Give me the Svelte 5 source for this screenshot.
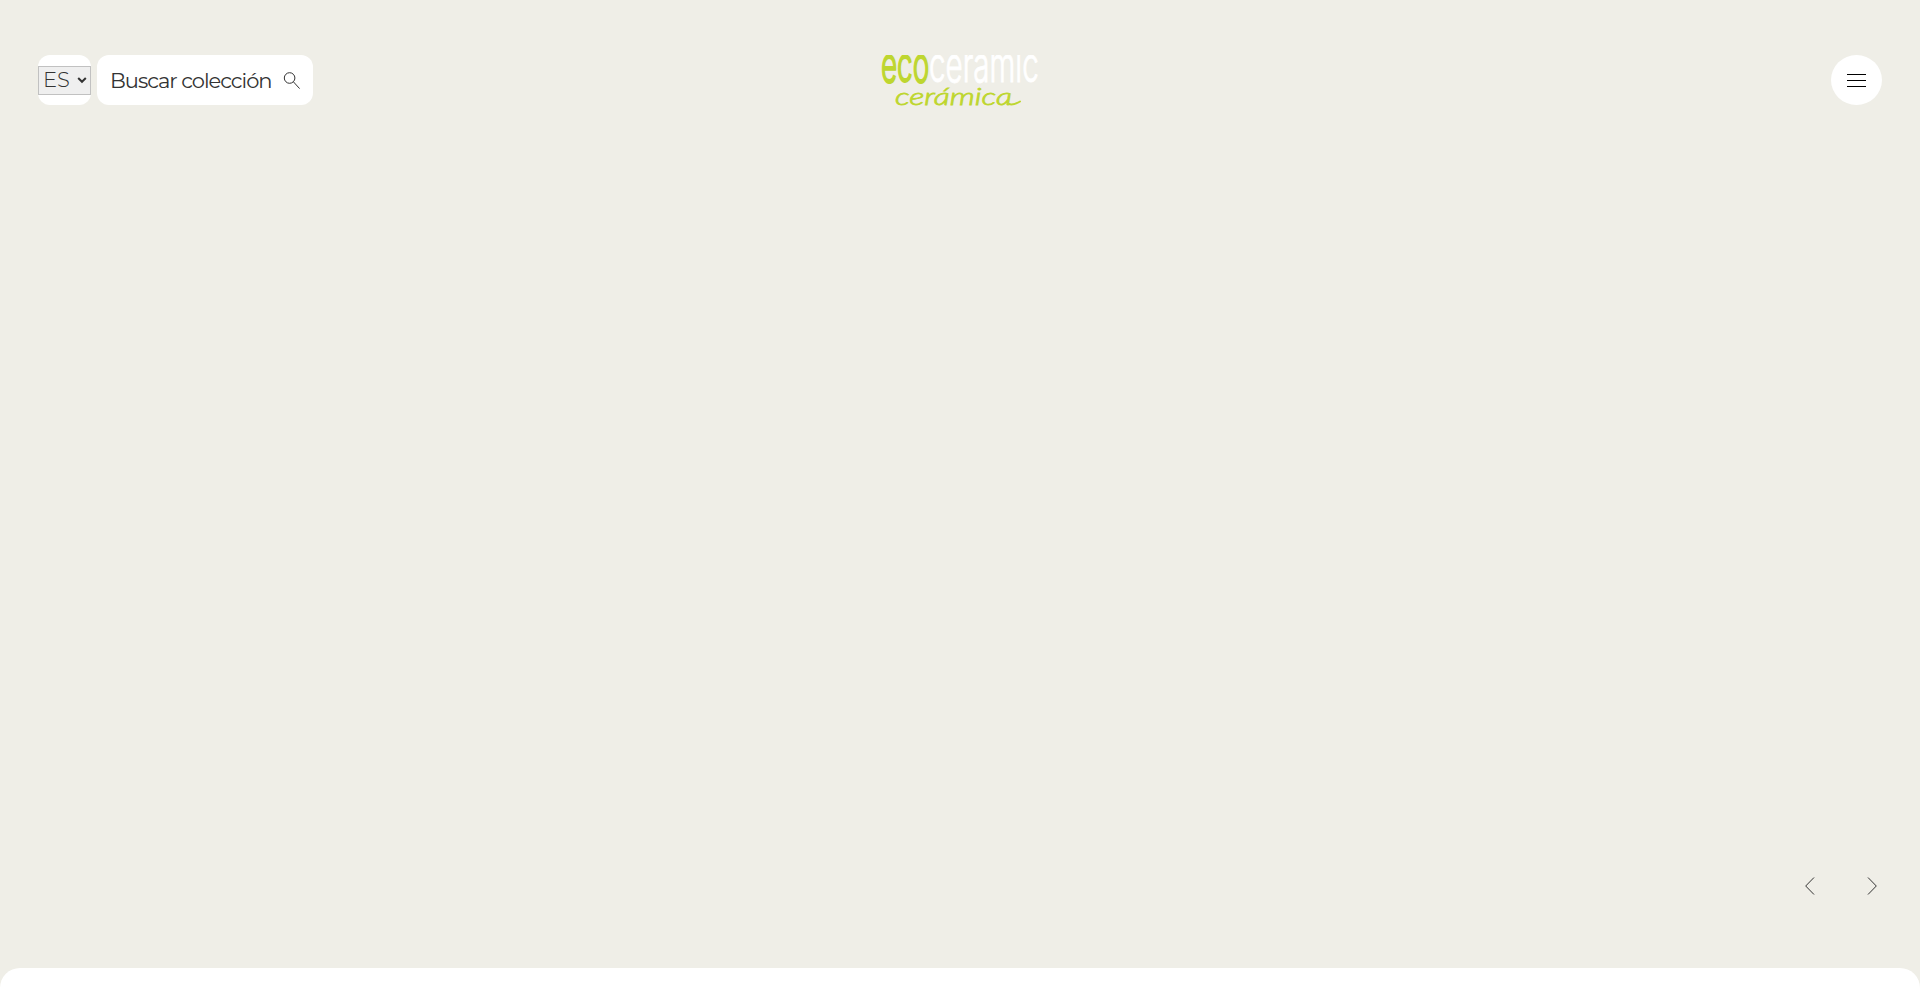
<script>
  let language = $state('ES');
  let menuOpen = $state(false);
  const languages = ['ES', 'EN', 'FR'];
</script>

<header>
  <div class="tools">
    <div class="language">
      <select bind:value={language} aria-label="Idioma">
        {#each languages as lang}
          <option value={lang}>{lang}</option>
        {/each}
      </select>
      <svg class="caret" viewBox="0 0 10 8"><path d="M1.2 2l3.8 3.8L8.8 2" /></svg>
    </div>
    <button class="search">
      <span>Buscar colección</span>
      <svg viewBox="0 0 18 18"><circle cx="6.6" cy="6" r="5.3" /><path d="M10.4 9.8l6.2 6.8" /></svg>
    </button>
  </div>

  <svg class="logo" viewBox="0 0 158 54">
    <g class="wordmark">
      <text class="eco" transform="translate(0 27) scale(.56 1)" textLength="86" lengthAdjust="spacingAndGlyphs">eco</text>
      <text class="ceramic" transform="translate(48 27) scale(.56 1)" textLength="196" lengthAdjust="spacingAndGlyphs">ceramic</text>
    </g>
    <text class="script" x="14" y="50" textLength="117" lengthAdjust="spacingAndGlyphs">cerámica</text>
    <path class="tail" d="M128 49q4 1.500 11-2.500" />
  </svg>

  <button class="menu" aria-label="Menú" onclick={() => (menuOpen = !menuOpen)}>
    <svg viewBox="0 0 19 13"><path d="M0 .5h19M0 6.500h19M0 12.500h19" /></svg>
  </button>
</header>

<main>
  <nav class="slider">
    <button aria-label="Anterior"><svg viewBox="0 0 10 18"><path d="M9 .5L.7 9 9 17.5" /></svg></button>
    <button aria-label="Siguiente"><svg viewBox="0 0 10 18"><path d="M1 .5L9.3 9 1 17.5" /></svg></button>
  </nav>
</main>

<section class="content"></section>

<style>
  :global(body) {
    background: #efeee7;
  }

  :global(#app) {
    display: flex;
    flex-direction: column;
    height: 993px;
    overflow: hidden;
    font-family: Montserrat, Inter, sans-serif;
    color: #333;
  }

  button {
    border: none;
    padding: 0;
    font: inherit;
    color: inherit;
    cursor: pointer;
  }

  svg {
    fill: none;
    stroke: #333;
  }

  header {
    display: grid;
    grid-template-columns: 1fr 158px 1fr;
    padding: 55px 38px 0;
  }

  .tools {
    display: flex;
    gap: 6px;
  }

  .language {
    position: relative;
    display: flex;
    align-items: center;
    width: 53px;
    height: 50px;
    background: #fff;
    border-radius: 12px;
  }

  select {
    appearance: none;
    box-sizing: border-box;
    width: 53px;
    height: 29px;
    padding: 0 0 2px 4px;
    border: 1px solid #c1c1c1;
    border-radius: 0;
    background: #efefef;
    font: 300 21px Montserrat, Inter, sans-serif;
    color: #333;
  }

  .caret {
    position: absolute;
    right: 4px;
    top: 21px;
    width: 10px;
    height: 8px;
    stroke-width: 2;
    pointer-events: none;
  }

  .search {
    display: flex;
    align-items: center;
    justify-content: space-between;
    box-sizing: border-box;
    width: 216px;
    height: 50px;
    padding: 1px 12px 0 13px;
    background: #fff;
    border-radius: 12px;
    font-size: 21px;
    letter-spacing: -1.02px;
    white-space: nowrap;
  }

  .search svg {
    width: 18px;
    height: 18px;
  }

  .logo {
    width: 158px;
    height: 54px;
    overflow: hidden;
  }

  .logo text {
    stroke: #bed630;
    fill: #bed630;
    vector-effect: non-scaling-stroke;
  }

  .wordmark text {
    font: 300 49px Inter, sans-serif;
    stroke-width: 1.6;
  }

  .wordmark .ceramic {
    stroke-width: 0.8;
    stroke: #fff;
    fill: #fff;
  }

  .logo .script {
    font: italic 300 24px Lato, sans-serif;
    stroke-width: 0.8;
  }

  .tail {
    stroke: #bed630;
    stroke-width: 2;
    stroke-linecap: round;
  }

  .menu {
    display: flex;
    align-items: flex-start;
    justify-content: center;
    justify-self: end;
    box-sizing: border-box;
    width: 51px;
    height: 50px;
    padding-top: 19px;
    background: #fff;
    border-radius: 50%;
  }

  .menu svg {
    width: 19px;
    height: 13px;
    stroke: #000;
    shape-rendering: crispEdges;
  }

  main {
    flex: 1;
    display: flex;
    align-items: flex-end;
    justify-content: flex-end;
  }

  .slider {
    display: flex;
    gap: 52px;
    padding: 0 43px 73px 0;
  }

  .slider button {
    display: flex;
    background: none;
  }

  .slider svg {
    width: 10px;
    height: 18px;
  }

  .content {
    height: 25px;
    background: #fff;
    border-radius: 20px 20px 0 0;
  }
</style>
